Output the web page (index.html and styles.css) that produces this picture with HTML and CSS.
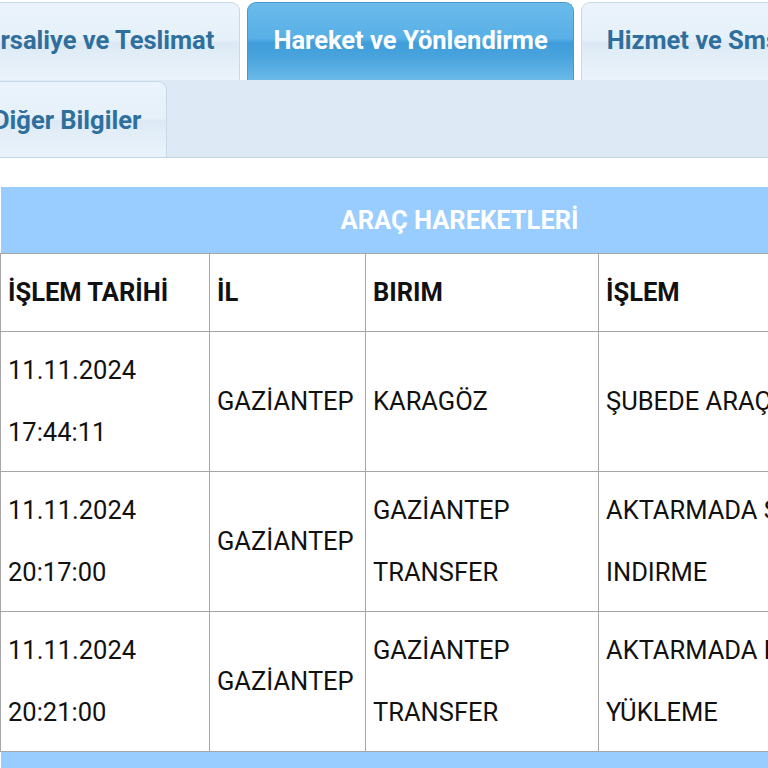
FILE: index.html
```html
<!DOCTYPE html>
<html lang="tr">
<head>
<meta charset="utf-8">
<title>Araç Hareketleri</title>
<link rel="stylesheet" href="styles.css">
</head>
<body>
<div class="tabs">
  <div class="tab-row tab-row-top">
    <div class="tab">İrsaliye ve Teslimat</div>
    <div class="tab tab-active">Hareket ve Yönlendirme</div>
    <div class="tab">Hizmet ve Sms Bilgileri</div>
  </div>
  <div class="tab-row tab-row-bottom">
    <div class="tab">Diğer Bilgiler</div>
  </div>
</div>

<table class="moves">
  <colgroup>
    <col class="c1"><col class="c2"><col class="c3"><col class="c4">
  </colgroup>
  <thead>
    <tr><th colspan="4" class="title">ARAÇ HAREKETLERİ</th></tr>
    <tr class="head">
      <th>İŞLEM TARİHİ</th><th>İL</th><th>BIRIM</th><th>İŞLEM</th>
    </tr>
  </thead>
  <tbody>
    <tr>
      <td>11.11.2024<br><br>17:44:11</td>
      <td>GAZİANTEP</td>
      <td>KARAGÖZ</td>
      <td>ŞUBEDE ARAÇTAN İNDİRME</td>
    </tr>
    <tr>
      <td>11.11.2024<br><br>20:17:00</td>
      <td>GAZİANTEP</td>
      <td>GAZİANTEP<br><br>TRANSFER</td>
      <td>AKTARMADA SEFERDEN<br><br>INDIRME</td>
    </tr>
    <tr>
      <td>11.11.2024<br><br>20:21:00</td>
      <td>GAZİANTEP</td>
      <td>GAZİANTEP<br><br>TRANSFER</td>
      <td>AKTARMADA KAMYONA<br><br>YÜKLEME</td>
    </tr>
  </tbody>
  <tfoot>
    <tr><td colspan="4" class="foot"></td></tr>
  </tfoot>
</table>
</body>
</html>
```

FILE: styles.css
```css
html, body {
  margin: 0;
  padding: 0;
  overflow: hidden;
  background: #ffffff;
  font-family: Roboto, "Noto Sans", "Liberation Sans", sans-serif;
}

.tabs {
  width: 768px;
  border-bottom: 1px solid #c3d6e6;
}

.tab-row {
  display: flex;
  gap: 7px;
  padding-left: 0;
  white-space: nowrap;
  align-items: flex-end;
}

.tab-row-top {
  height: 80px;
  background: #ffffff;
}

.tab-row-bottom {
  height: 77px;
  background: #dde9f5;
}

.tab-row .tab:first-child {
  margin-left: -33px;
}

.tab {
  flex: none;
  height: 78px;
  padding: 0 25px 4px;
  box-sizing: border-box;
  display: flex;
  align-items: center;
  font-size: 25.5px;
  font-weight: 700;
  color: #2f6f9d;
  border: 1px solid #c7d8e6;
  border-bottom: none;
  border-radius: 9px 9px 0 0;
  background: linear-gradient(#ebf4fc 0%, #e5f0f9 48%, #dce9f4 52%, #e3eef8 72%, #eaf3fb 100%);
}

.tab-row-bottom .tab {
  height: 76px;
  padding-bottom: 0;
}

.tab-active {
  color: #ffffff;
  border-color: #4b97cb;
  background: linear-gradient(#6abbeb 0%, #58b0e6 46%, #3f9cd9 52%, #4aa5de 72%, #6ab9e8 100%);
}

.moves {
  margin-top: 29px;
  width: 918px;
  border-collapse: collapse;
  table-layout: fixed;
  font-size: 25.5px;
  color: #111111;
}

.c1 { width: 209px; }
.c2 { width: 156px; }
.c3 { width: 233px; }
.c4 { width: 320px; }

.title {
  background: #99ccff;
  color: #ffffff;
  font-size: 25.5px;
  font-weight: 700;
  height: 66px;
  padding: 0;
  text-align: center;
  border: none;
}

.head th {
  font-weight: 700;
  text-align: left;
  color: #111111;
}

.moves th:not(.title),
.moves td {
  border: 1px solid #a6a6a6;
  padding: 23px 7px;
  line-height: 31px;
  vertical-align: middle;
  text-align: left;
  white-space: nowrap;
  overflow: hidden;
}

.moves td.foot {
  background: #99ccff;
  height: 40px;
  padding: 0;
  border: none;
}
```
